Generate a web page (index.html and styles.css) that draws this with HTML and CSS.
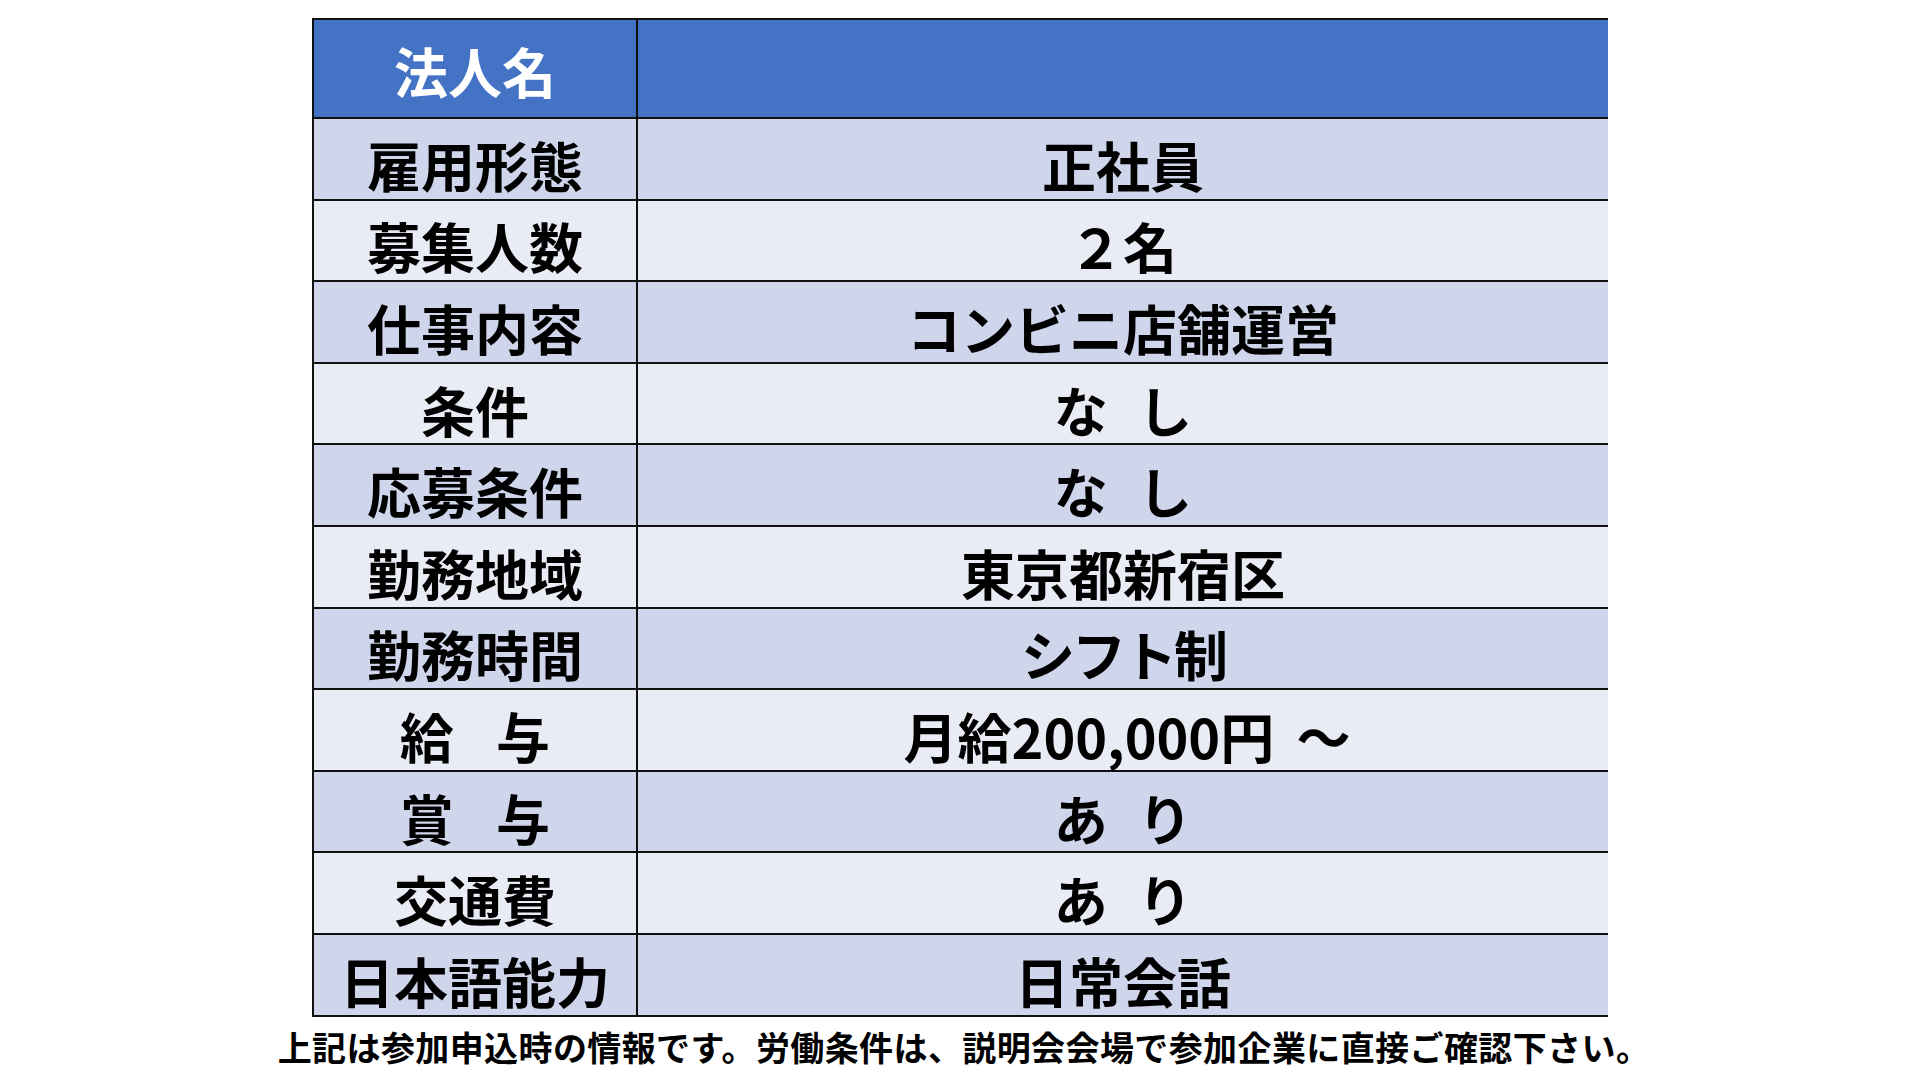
FILE: index.html
```html
<!DOCTYPE html>
<html lang="ja">
<head>
<meta charset="utf-8">
<title>募集要項</title>
<link rel="stylesheet" href="styles.css">
</head>
<body>
<main class="page">
  <div class="sheet">
    <div class="cell head label">法人名</div>
    <div class="cell head value"></div>

    <div class="cell dark label">雇用形態</div>
    <div class="cell dark value">正社員</div>

    <div class="cell light label">募集人数</div>
    <div class="cell light value">２名</div>

    <div class="cell dark label">仕事内容</div>
    <div class="cell dark value">コンビニ店舗運営</div>

    <div class="cell light label">条件</div>
    <div class="cell light value spaced">な し</div>

    <div class="cell dark label">応募条件</div>
    <div class="cell dark value spaced">な し</div>

    <div class="cell light label">勤務地域</div>
    <div class="cell light value">東京都新宿区</div>

    <div class="cell dark label">勤務時間</div>
    <div class="cell dark value narrow">シフト制</div>

    <div class="cell light label wide-gap">給 与</div>
    <div class="cell light value salary">月給200,000円 ～</div>

    <div class="cell dark label wide-gap">賞 与</div>
    <div class="cell dark value spaced">あ り</div>

    <div class="cell light label">交通費</div>
    <div class="cell light value spaced">あ り</div>

    <div class="cell dark label">日本語能力</div>
    <div class="cell dark value">日常会話</div>
  </div>
  <p class="note">上記は参加申込時の情報です。労働条件は、説明会会場で参加企業に直接ご確認下さい。</p>
</main>
</body>
</html>
```
FILE: styles.css
```css
html, body {
  margin: 0;
  padding: 0;
  background: #ffffff;
}

body {
  font-family: "Noto Sans CJK JP", "Noto Sans", sans-serif;
  color: #000000;
}

.page {
  width: 1920px;
  height: 1080px;
  display: flex;
  flex-direction: column;
  align-items: center;
  padding-top: 18px;
  box-sizing: border-box;
}

.sheet {
  display: grid;
  grid-template-columns: 322px 970px;
  grid-template-rows: 97px repeat(11, 79.6px);
  gap: 2px;
  padding: 2px;
  background: #111111;
  width: 1296px;
  box-sizing: border-box;
}

.cell {
  display: flex;
  align-items: center;
  justify-content: center;
  font-size: 54px;
  font-weight: 700;
  line-height: 1;
  white-space: pre;
  padding-top: 12px;
  box-sizing: border-box;
}

.head {
  background: #4472c4;
  color: #ffffff;
  padding-top: 4px;
}

.dark {
  background: #cfd5ea;
}

.light {
  background: #e9ebf5;
}

.spaced {
  word-spacing: 18px;
}

.wide-gap {
  word-spacing: 30px;
}

.salary {
  word-spacing: 10px;
  padding-left: 8px;
}

.narrow {
  letter-spacing: -3px;
}

.note {
  margin: 13px 0 0;
  padding-left: 8px;
  font-size: 34px;
  font-weight: 700;
  line-height: 1;
  letter-spacing: 0.4px;
  white-space: nowrap;
}
```
